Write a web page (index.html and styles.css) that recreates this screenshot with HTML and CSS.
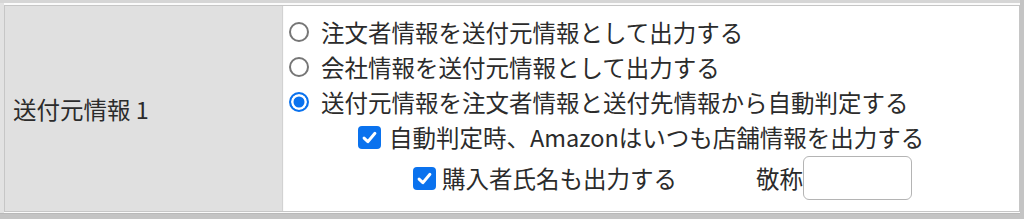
FILE: index.html
```html
<!DOCTYPE html>
<html lang="ja">
<head>
    <meta charset="UTF-8">
    <title>送付元情報</title>
    <link rel="stylesheet" href="styles.css">
</head>
<body>
    <div class="panel">
        <table class="setting">
            <tr>
                <th class="label">送付元情報 1</th>
                <td class="value">
                    <label class="row">
                        <span class="radio"></span>
                        注文者情報を送付元情報として出力する
                    </label>
                    <label class="row">
                        <span class="radio"></span>
                        会社情報を送付元情報として出力する
                    </label>
                    <label class="row">
                        <span class="radio radio-on"></span>
                        送付元情報を注文者情報と送付先情報から自動判定する
                    </label>
                    <label class="row row-sub">
                        <span class="check"><svg width="23" height="23" viewBox="0 0 22 22"><path d="M5.8 11.6 L9.4 15 L16.2 7" fill="none" stroke="#fff" stroke-width="2.8" stroke-linecap="round" stroke-linejoin="round"/></svg></span>
                        自動判定時、Amazonはいつも店舗情報を出力する
                    </label>
                    <div class="row row-sub2">
                        <label class="inline">
                            <span class="check"><svg width="23" height="23" viewBox="0 0 22 22"><path d="M5.8 11.6 L9.4 15 L16.2 7" fill="none" stroke="#fff" stroke-width="2.8" stroke-linecap="round" stroke-linejoin="round"/></svg></span>
                            購入者氏名も出力する
                        </label>
                        <span class="honorific">敬称</span><input class="text-input" type="text">
                    </div>
                </td>
            </tr>
        </table>
    </div>
</body>
</html>
```

FILE: styles.css
```css
body{
    margin: 0;
    background-color: #c4c4c4;
    font-family: "Noto Sans CJK JP", "Noto Sans", sans-serif;
    color: #2b2b2b;
}

.panel{
    width: 1020px;
    box-sizing: border-box;
    background-color: #e2e2e2;
    border-top: 3px solid #d6d6d6;
    border-bottom: 1px solid #b9b9b9;
    padding: 2px 0 1px 4px;
}

.setting{
    width: 1016px;
    height: 207px;
    border-collapse: separate;
    border-spacing: 0;
    border: 1px solid #c6c6c6;
    box-shadow: 0 -2px 0 #fbfbfb, 0 1px 0 #fbfbfb;
    font-size: 23.5px;
}

.label{
    width: 269px;
    padding: 0 0 0 8px;
    background-color: #e0e0e0;
    border-right: 1px solid #d2d2d2;
    text-align: left;
    font-weight: normal;
    vertical-align: middle;
}

.value{
    background-color: #fff;
    padding: 8px 0 0 5px;
    vertical-align: top;
    border-left: 1px solid #fafafa;
}

.row{
    display: flex;
    align-items: center;
    height: 35px;
    white-space: nowrap;
}

/* ラジオボタン */
.radio{
    display: block;
    flex: none;
    width: 20px;
    height: 20px;
    box-sizing: border-box;
    border: 2px solid #767676;
    border-radius: 50%;
    background-color: #fff;
    margin-right: 12px;
}

.radio-on{
    border: 2.5px solid #0a72ee;
    background-color: #0a72ee;
    box-shadow: inset 0 0 0 2.5px #fff;
}

/* チェックボックス */
.check{
    display: block;
    flex: none;
    width: 23px;
    height: 23px;
    border-radius: 4px;
    background-color: #0a72ee;
    margin-right: 8px;
}

.check svg{
    display: block;
}

.row-sub{
    height: 36px;
    padding-left: 69px;
}

.row-sub2{
    height: 46px;
    padding-left: 124px;
}

.row-sub2 .check{
    margin-right: 6px;
}

.inline{
    display: flex;
    align-items: center;
}

.honorific{
    margin-left: 79px;
}

.text-input{
    width: 109px;
    height: 44px;
    box-sizing: border-box;
    border: 1px solid #b4b4b4;
    border-radius: 6px;
    background: #fff;
    margin: 0;
}
```
